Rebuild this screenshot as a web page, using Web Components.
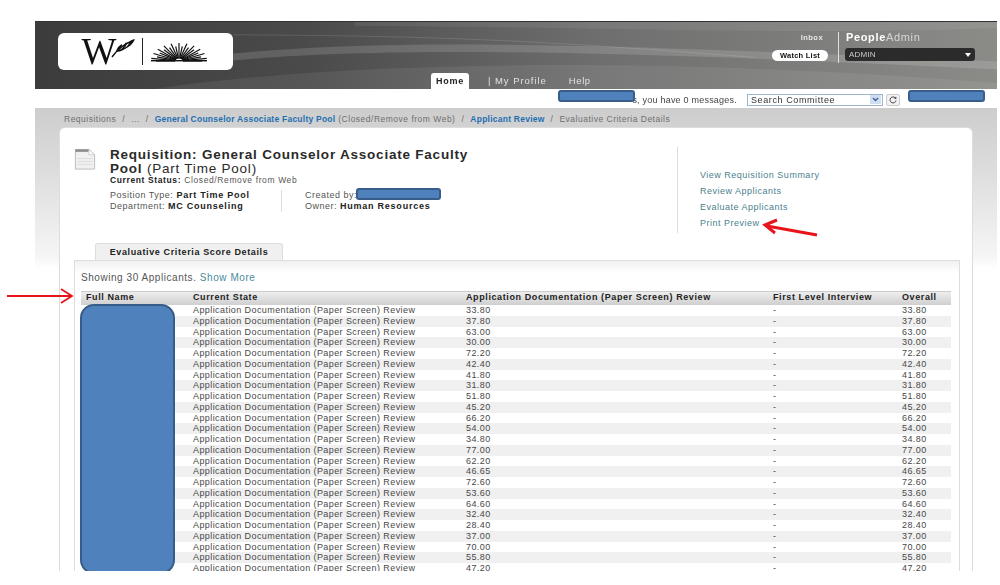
<!DOCTYPE html>
<html><head><meta charset="utf-8"><style>
html,body{margin:0;padding:0;background:#fff;overflow:hidden}
body{width:1000px;height:585px;font-family:"Liberation Sans",Arial,sans-serif}
</style></head><body>
<pa-page></pa-page>
<script>
const base=':host{box-sizing:border-box}*{box-sizing:border-box}';
function def(name,html,extra){
  customElements.define(name,class extends HTMLElement{
    constructor(){super();this.attachShadow({mode:'open'}).innerHTML=html;if(extra)extra(this.shadowRoot,this)}
  });
}
def('pa-redact',`<style>:host{display:block;position:absolute;background:#4f81bd;border:2px solid #385d8a;border-radius:var(--r,3px)}</style>`);
def('pa-logo',`<style>${base}:host{display:flex;align-items:center;justify-content:center;gap:7px;width:175px;height:37px;background:#fff;border-radius:6px;margin:11px 0 0 23px}
.w{font:400 37px/30px "Liberation Serif",serif;color:#111;letter-spacing:-2px;margin-left:-1px}
.bar{width:1px;height:27px;background:#222}svg{display:block}</style>
<span class="w">W</span>
<svg width="24" height="20" viewBox="0 0 24 20" style="margin:-8px 0 0 -10px"><path d="M1 19C6 12 11 7 23 2" stroke="#111" stroke-width="1.4" fill="none"/><path d="M5 14C6 9 9 7 11 6 11 9 10 11 8 12 11 11 13 8 15 4 16 7 15 9 13 10 16 9 18 6 19 3 21 2 24 1 24 1 22 6 18 9 14 11 11 13 8 14 5 14Z" fill="#111"/></svg>
<span class="bar"></span>
<svg id="sun" width="58" height="20" viewBox="0 0 58 20"></svg>`,r=>{
  let s='';for(let i=0;i<=22;i++){const a=Math.PI*(i/22);const lo=i%2?1:.82;const rx=28*lo,ry=18*lo;
  const x=29-Math.cos(a)*rx,y=19-Math.sin(a)*ry;const x0=29-Math.cos(a)*4,y0=19-Math.sin(a)*2.5;
  s+=`<line x1="${x0.toFixed(1)}" y1="${y0.toFixed(1)}" x2="${x.toFixed(1)}" y2="${y.toFixed(1)}" stroke="#111" stroke-width="1.2"/>`}
  s+='<rect x="1" y="18" width="56" height="1.4" fill="#111"/>';
  r.getElementById('sun').innerHTML=s;
});
def('pa-nav',`<style>${base}:host{display:flex;align-items:flex-end;height:68px;padding-left:198px;font-size:9.5px;letter-spacing:.62px;color:#e2e2e2;flex:1}
.home{width:38px;height:17px;background:#fff;border-radius:3px 3px 0 0;color:#222;font-size:9px;font-weight:700;text-align:center;line-height:17px;letter-spacing:.8px}
span{display:block;line-height:14px;padding-bottom:2px}
.p{margin-left:19px;letter-spacing:.95px}.h{margin-left:22px}</style>
<div class="home">Home</div><span class="p">| My Profile</span><span class="h">Help</span>`);
def('pa-account',`<style>${base}:host{display:flex;margin:10px 22px 0 0;gap:6px;align-items:stretch;height:31px}
.a{display:flex;flex-direction:column;align-items:flex-end;justify-content:space-between;padding:1px 10px 0 0;border-right:1px solid #e0e0e0;width:66px}
.i{font:700 7.5px/9px "Liberation Sans",sans-serif;color:#e8e8e8;letter-spacing:.45px;margin:0 5px 0 0}
.w{width:56px;height:11px;border-radius:6px;background:#fff;color:#111;font:700 7.5px/11px "Liberation Sans",sans-serif;text-align:center;letter-spacing:.25px;margin:0 0 2px}
.b{width:130px;display:flex;flex-direction:column;gap:5px}
.t{font:11px/11px "Liberation Sans",sans-serif;color:#d8d8d8;letter-spacing:.65px;margin-left:1px}.t b{color:#fff}
.d{height:13px;background:#2b2b2b;border-radius:3px;color:#ccc;font:8px/13px "Liberation Sans",sans-serif;padding:0 4px;display:flex;justify-content:space-between;align-items:center;letter-spacing:.2px}
.d i{width:0;height:0;border:3px solid transparent;border-top:4px solid #fff;border-bottom:0}</style>
<div class="a"><span class="i">Inbox</span><span class="w">Watch List</span></div>
<div class="b"><div class="t"><b>People</b>Admin</div><div class="d">ADMIN<i></i></div></div>`);
def('pa-header',`<style>${base}:host{display:flex;position:relative;height:68px;background:linear-gradient(90deg,#3c3c3c 0,#4a4a4a 28%,#6e6e6e 58%,#8b8b88 100%);border-top:1px solid #333;overflow:hidden}
svg{position:absolute;inset:0;width:100%;height:100%}pa-logo,pa-nav,pa-account{position:relative}</style>
<svg viewBox="0 0 962 68" preserveAspectRatio="none"><path d="M198 32C360 16 560 22 962 40L962 48C600 30 360 24 198 39Z" fill="#fff" opacity=".14"/><path d="M320 4C520 4 760 14 962 6L962 0 320 0Z" fill="#fff" opacity=".07"/><path d="M120 68C300 40 620 34 962 62L962 68Z" fill="#fff" opacity=".07"/><path d="M198 13C420 14 520 20 720 36" stroke="#fff" stroke-opacity=".12" fill="none"/></svg>
<pa-logo></pa-logo><pa-nav></pa-nav><pa-account></pa-account>`);
def('pa-subbar',`<style>${base}:host{display:flex;position:relative;height:19px;align-items:center;justify-content:flex-end;padding:2px 97px 0 0;font-size:9px;color:#444;letter-spacing:.22px}
.m{margin-right:10px}
.s{width:136px;height:12px;border:1px solid #9db4cc;background:#fff;display:flex;align-items:center;justify-content:space-between;padding:0 1px 0 3px;font-size:9px;letter-spacing:.6px;color:#333}
.s i{width:11px;height:9px;background:#cfdff2;display:flex;align-items:center;justify-content:center}
.r{width:14px;height:12px;margin-left:3px;border:1px solid #ccc;border-radius:2px;background:#f2f2f2;display:flex;align-items:center;justify-content:center}
pa-redact{top:1px;height:12px}</style>
<span class="m">s, you have 0 messages.</span>
<div class="s">Search Committee<i><svg width="7" height="5" viewBox="0 0 7 5"><path d="M1 1l2.5 2.5L6 1" fill="none" stroke="#3a5f95" stroke-width="1.4"/></svg></i></div>
<div class="r"><svg width="8" height="8" viewBox="0 0 8 8"><path d="M6.5 2.2A3 3 0 1 0 7 4.5" fill="none" stroke="#444"/><path d="M4.8 2.6L7.4 3 7.2.4Z" fill="#444"/></svg></div>
<pa-redact style="left:523px;width:77px"></pa-redact><pa-redact style="left:873px;width:77px"></pa-redact>`);
def('pa-crumbs',`<style>${base}:host{display:block;height:19px;padding:6px 0 0 29px;font-size:8.5px;line-height:10px;color:#6f6f6f;letter-spacing:.5px;white-space:nowrap}
b{color:#1f6fb0;letter-spacing:.24px}span{margin:0 6px}</style>
<strong style="font-weight:400">Requisitions</strong><span>/</span>...<span>/</span><b>General Counselor Associate Faculty Pool</b> (Closed/Remove from Web)<span>/</span><b>Applicant Review</b><span>/</span>Evaluative Criteria Details`);
def('pa-summary',`<style>${base}:host{display:flex;height:115px;padding:20px 0 0 14px;color:#333}
.ic{width:36px;flex:none}
.main{width:567px;flex:none}
h1{margin:0;font-size:13.5px;line-height:13.5px;font-weight:700;color:#2a2a2a;letter-spacing:.78px;width:372px}
h1 span{font-weight:400}
.st{font-size:8.5px;line-height:10px;letter-spacing:.62px;color:#555}.st b{color:#222}
.meta{display:flex;margin-top:5px;font-size:9px;line-height:11px;letter-spacing:.5px;color:#555}
.meta b{color:#222;letter-spacing:.76px}
.c1{width:172px;border-right:1px solid #ddd;height:22px}.c2{padding-left:23px}
.links{border-left:1px solid #ddd;height:86px;margin-top:-1px;padding:23px 0 0 22px;display:flex;flex-direction:column;gap:6px;font-size:9px;line-height:10px;letter-spacing:.5px;color:#4b7f8e}</style>
<div class="ic"><svg width="22" height="23" viewBox="0 0 22 24"><path d="M1 1.5H15L21 7V22H1Z" fill="#f0f0f0" stroke="#bbb"/><path d="M1 1.5H15V4H1Z" fill="#8a8a8a"/><path d="M15 1.5L21 7H15Z" fill="#fff" stroke="#bbb" stroke-width=".6"/><path d="M3 11H19M3 14H19M3 17H19" stroke="#ddd"/></svg></div>
<div class="main"><h1>Requisition: General Counselor Associate Faculty Pool <span>(Part Time Pool)</span></h1>
<div class="st"><b>Current Status:</b> Closed/Remove from Web</div>
<div class="meta"><div class="c1">Position Type: <b>Part Time Pool</b><br>Department: <b>MC Counseling</b></div><div class="c2">Created by:<br>Owner: <b>Human Resources</b></div></div></div>
<div class="links"><span>View Requisition Summary</span><span>Review Applicants</span><span>Evaluate Applicants</span><span>Print Preview</span></div>`);
def('pa-tab',`<style>${base}:host{display:block;width:188px;height:17px;margin-left:35px;background:#f0f0f0;border:1px solid #ddd;border-bottom:0;border-radius:3px 3px 0 0;font-size:9px;line-height:16px;font-weight:700;text-align:center;color:#222;letter-spacing:.62px}</style><slot></slot>`);
def('pa-table',`<style>${base}:host{display:block;margin-left:6px;width:870px;font-size:9px;letter-spacing:.42px;color:#484848}
.r{display:grid;grid-template-columns:112px 273px 307px 129px 49px;height:10.75px;line-height:10.75px;white-space:nowrap}
.r>:first-child{padding-left:5px}
.r:nth-child(odd):not(.h){background:#f0f0f0}
.h{height:14px;line-height:11px;background:linear-gradient(#eee,#cfcfcf);font-weight:700;color:#222;letter-spacing:.6px;border-top:1px solid #ccc}</style><div id="t"></div>`,r=>{
  const vals='33.80 37.80 63.00 30.00 72.20 42.40 41.80 31.80 51.80 45.20 66.20 54.00 34.80 77.00 62.20 46.65 72.60 53.60 64.60 32.40 28.40 37.00 70.00 55.80 47.20'.split(' ');
  let h='<div class="r h"><span>Full Name</span><span>Current State</span><span>Application Documentation (Paper Screen) Review</span><span>First Level Interview</span><span>Overall</span></div>';
  for(const v of vals)h+=`<div class="r"><span></span><span>Application Documentation (Paper Screen) Review</span><span>${v}</span><span>-</span><span>${v}</span></div>`;
  r.getElementById('t').innerHTML=h;
});
def('pa-panel',`<style>${base}:host{display:block;margin-left:14px;width:886px;height:312px;border:1px solid #ddd;border-bottom:0;background:linear-gradient(#f1f1f1,#fff 12px) no-repeat;background-size:100% 12px;background-color:#fff}
p{margin:0;padding:11px 0 0 6px;height:30px;font-size:10px;line-height:11px;color:#555;letter-spacing:.55px}p span{color:#4b8a9a}</style>
<p>Showing 30 Applicants. <span>Show More</span></p><pa-table></pa-table>`);
def('pa-card',`<style>${base}:host{display:block;width:914px;margin-left:24px;height:444px;background:#fff;border:1px solid #ddd;border-bottom:0;border-radius:6px 6px 0 0}</style><slot></slot>`);
def('pa-arrow',`<style>:host{display:block;position:absolute;line-height:0}</style><slot></slot>`);
def('pa-page',`<style>${base}:host{display:block;width:1000px;height:585px;padding-top:21px;position:relative;filter:blur(.35px)}
.clip{width:962px;margin-left:35px;height:550px;overflow:hidden;position:relative}
.band{height:463px;background:linear-gradient(#cdcdcd 0,#dcdcdc 60px,#f6f6f6 150px,#fff 160px)}
pa-redact{--r:14px}</style>
<div class="clip"><pa-header></pa-header><pa-subbar></pa-subbar>
<div class="band"><pa-crumbs></pa-crumbs><pa-card><pa-summary></pa-summary><pa-tab>Evaluative Criteria Score Details</pa-tab><pa-panel></pa-panel></pa-card></div>
<pa-redact style="left:321px;top:167px;width:85px;height:12px;--r:3px"></pa-redact>
<pa-redact style="left:45px;top:283px;width:95px;height:270px"></pa-redact></div>
<pa-arrow style="left:760px;top:218px"><svg width="60" height="20" viewBox="0 0 60 20"><path d="M57 17L7 8" stroke="#e8141c" stroke-width="3.2" fill="none"/><path d="M17 2L5 7 15 15" stroke="#e8141c" stroke-width="3" fill="none"/></svg></pa-arrow>
<pa-arrow style="left:7px;top:288px"><svg width="68" height="16" viewBox="0 0 68 16"><path d="M0 8H64" stroke="#e8141c" stroke-width="1.8"/><path d="M54 1L65 8 54 15" stroke="#e8141c" stroke-width="1.8" fill="none"/></svg></pa-arrow>`);
</script>
</body></html>
